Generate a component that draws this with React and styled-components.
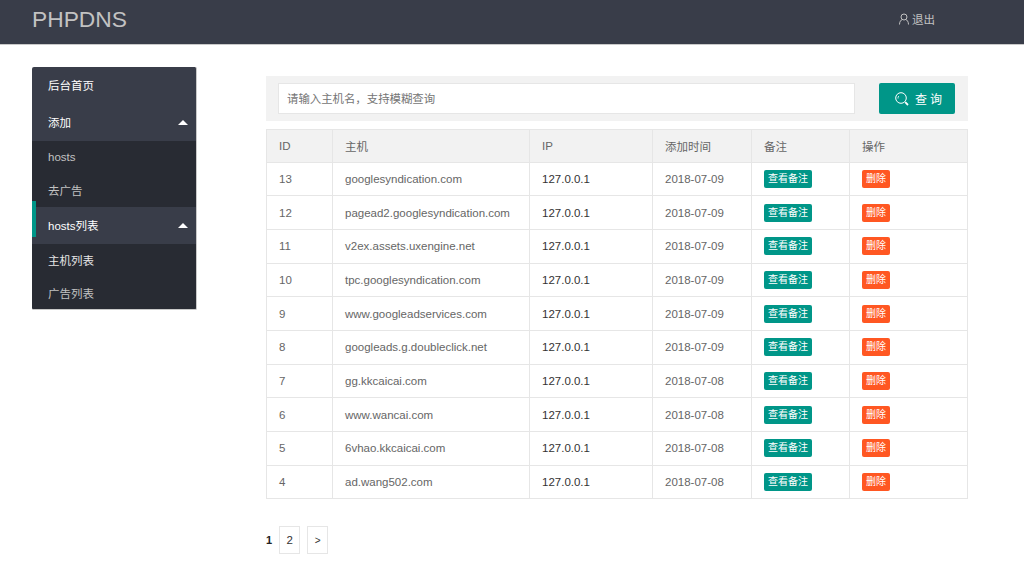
import React from 'react';
import styled, { createGlobalStyle } from 'styled-components';

const GlobalStyle = createGlobalStyle`
  html, body {
    margin: 0;
    padding: 0;
    background: #fff;
  }
  body {
    font-family: "Liberation Sans", "Noto Sans CJK SC", sans-serif;
    font-size: 11.5px;
    color: #666;
  }
  * {
    box-sizing: border-box;
  }
`;

const Page = styled.div`
  width: 1024px;
  height: 586px;
  overflow: hidden;
`;

const Header = styled.div`
  display: flex;
  align-items: center;
  justify-content: space-between;
  height: 45px;
  padding: 0 89px 0 32px;
  background-color: #393d49;
  border-bottom: 1px solid #c9c9c9;
`;

const Logo = styled.div`
  font-size: 22.8px;
  line-height: 38px;
  margin-top: -6px;
  color: #c2c2c2;
`;

const Logout = styled.a`
  display: flex;
  align-items: center;
  gap: 2px;
  font-size: 11.5px;
  color: #c2c2c2;
  margin-top: -7px;
`;

const Body = styled.div`
  display: flex;
  align-items: flex-start;
  padding: 22px 56px 0 32px;
`;

const Sidebar = styled.div`
  position: relative;
  width: 165px;
  margin-right: 69px;
  border-radius: 2px;
  border-right: 1px solid #c9c9c9;
  border-bottom: 1px solid #c9c9c9;
  background-color: #393d49;
  overflow: hidden;
`;

const NavItem = styled.div`
  display: flex;
  align-items: center;
  justify-content: space-between;
  height: 37px;
  padding: 0 8px 2px 16px;
  font-size: 11.5px;
  color: #fff;
`;

const SubNav = styled.div`
  background-color: #282b33;
`;

const SubItem = styled.div`
  display: flex;
  align-items: center;
  height: ${props => (props.short ? '32px' : '33px')};
  padding: 0 0 1px 16px;
  font-size: 11.5px;
  color: ${props => (props.bright ? '#e6e6e6' : '#c2c2c2')};
`;

const Caret = styled.span`
  width: 0;
  height: 0;
  margin-top: 2px;
  border-left: 5px solid transparent;
  border-right: 5px solid transparent;
  border-bottom: 5px solid #fff;
`;

const ActiveMark = styled.div`
  position: absolute;
  left: 0;
  top: 134px;
  width: 4px;
  height: 36px;
  background-color: #009688;
`;

const Main = styled.div`
  width: 702px;
  padding-top: 9px;
`;

const SearchBar = styled.div`
  display: flex;
  align-items: center;
  gap: 24px;
  height: 45px;
  padding: 0 13px 0 12px;
  margin-bottom: 8px;
  background-color: #f2f2f2;
`;

const SearchInput = styled.input`
  flex: 1;
  height: 31px;
  padding: 0 8px;
  border: 1px solid #e6e6e6;
  background: #fff;
  font-family: inherit;
  font-size: 11.4px;
  outline: none;

  &::placeholder {
    color: #757575;
    opacity: 1;
  }
`;

const SearchButton = styled.button`
  display: flex;
  align-items: center;
  justify-content: center;
  gap: 6px;
  width: 76px;
  height: 31px;
  padding: 0 0 0 6px;
  border: none;
  border-radius: 2px;
  background-color: #009688;
  color: #fff;
  font-family: inherit;
  font-size: 12px;
  letter-spacing: 3px;
`;

const Table = styled.table`
  width: 702px;
  table-layout: fixed;
  border-collapse: collapse;
  border: 1px solid #e6e6e6;
`;

const Th = styled.th`
  height: 32.5px;
  padding: 0 12px;
  text-align: left;
  font-weight: 400;
  font-size: 11.5px;
  color: #666;
  background-color: #f2f2f2;
  border: 1px solid #e6e6e6;
`;

const Td = styled.td`
  height: 33.7px;
  padding: 0 12px;
  font-size: 11.5px;
  color: ${props => (props.dark ? '#333' : '#666')};
  border: 1px solid #e6e6e6;
`;

const Tag = styled.span`
  display: inline-block;
  height: 18px;
  line-height: 18px;
  padding: 0 4px;
  border-radius: 2px;
  font-size: 10px;
  color: #fff;
  background-color: ${props => (props.danger ? '#ff5722' : '#009688')};
`;

const Pager = styled.div`
  display: flex;
  align-items: center;
  gap: 7px;
  margin-top: 27px;
  font-size: 11.5px;
`;

const Current = styled.b`
  color: #222;
  font-size: 11px;
`;

const PageLink = styled.a`
  display: flex;
  align-items: center;
  justify-content: center;
  width: 21px;
  height: 28px;
  border: 1px solid #e6e6e6;
  color: #333;
  font-size: ${props => (props.small ? '10px' : '11.5px')};
`;

const rows = [
  [13, 'googlesyndication.com', '2018-07-09'],
  [12, 'pagead2.googlesyndication.com', '2018-07-09'],
  [11, 'v2ex.assets.uxengine.net', '2018-07-09'],
  [10, 'tpc.googlesyndication.com', '2018-07-09'],
  [9, 'www.googleadservices.com', '2018-07-09'],
  [8, 'googleads.g.doubleclick.net', '2018-07-09'],
  [7, 'gg.kkcaicai.com', '2018-07-08'],
  [6, 'www.wancai.com', '2018-07-08'],
  [5, '6vhao.kkcaicai.com', '2018-07-08'],
  [4, 'ad.wang502.com', '2018-07-08'],
];

const columns = [66, 197, 123, 99, 98, 118];

function UserIcon() {
  return (
    <svg width="12" height="12" viewBox="0 0 12 12" fill="none" stroke="#c2c2c2" strokeWidth="1">
      <circle cx="6" cy="4" r="3" />
      <path d="M1.5 11.5c0-3 1.5-4.5 2.8-5M10.500 11.500c0-3-1.500-4.500-2.800-5" />
    </svg>
  );
}

function SearchIcon() {
  return (
    <svg width="14" height="14" viewBox="0 0 14 14" fill="none" stroke="#fff">
      <circle cx="6" cy="6" r="5.300" strokeWidth="1" />
      <path d="M10.200 10.200L13 13" strokeWidth="1.800" />
      <path d="M3 6.500a3 3 0 0 1 .800-2.500" strokeWidth="0.800" />
    </svg>
  );
}

export default function App() {
  return (
    <Page>
      <GlobalStyle />
      <Header>
        <Logo>PHPDNS</Logo>
        <Logout><UserIcon />退出</Logout>
      </Header>
      <Body>
        <Sidebar>
          <NavItem>后台首页</NavItem>
          <NavItem>添加<Caret /></NavItem>
          <SubNav>
            <SubItem>hosts</SubItem>
            <SubItem>去广告</SubItem>
          </SubNav>
          <NavItem>hosts列表<Caret /></NavItem>
          <SubNav>
            <SubItem bright>主机列表</SubItem>
            <SubItem short>广告列表</SubItem>
          </SubNav>
          <ActiveMark />
        </Sidebar>
        <Main>
          <SearchBar>
            <SearchInput placeholder="请输入主机名，支持模糊查询" />
            <SearchButton><SearchIcon />查询</SearchButton>
          </SearchBar>
          <Table>
            <colgroup>
              {columns.map((w, i) => <col key={i} width={w} />)}
            </colgroup>
            <thead>
              <tr>
                <Th>ID</Th>
                <Th>主机</Th>
                <Th>IP</Th>
                <Th>添加时间</Th>
                <Th>备注</Th>
                <Th>操作</Th>
              </tr>
            </thead>
            <tbody>
              {rows.map(([id, host, date]) => (
                <tr key={id}>
                  <Td>{id}</Td>
                  <Td>{host}</Td>
                  <Td dark>127.0.0.1</Td>
                  <Td>{date}</Td>
                  <Td><Tag>查看备注</Tag></Td>
                  <Td><Tag danger>删除</Tag></Td>
                </tr>
              ))}
            </tbody>
          </Table>
          <Pager>
            <Current>1</Current>
            <PageLink>2</PageLink>
            <PageLink small>&gt;</PageLink>
          </Pager>
        </Main>
      </Body>
    </Page>
  );
}
